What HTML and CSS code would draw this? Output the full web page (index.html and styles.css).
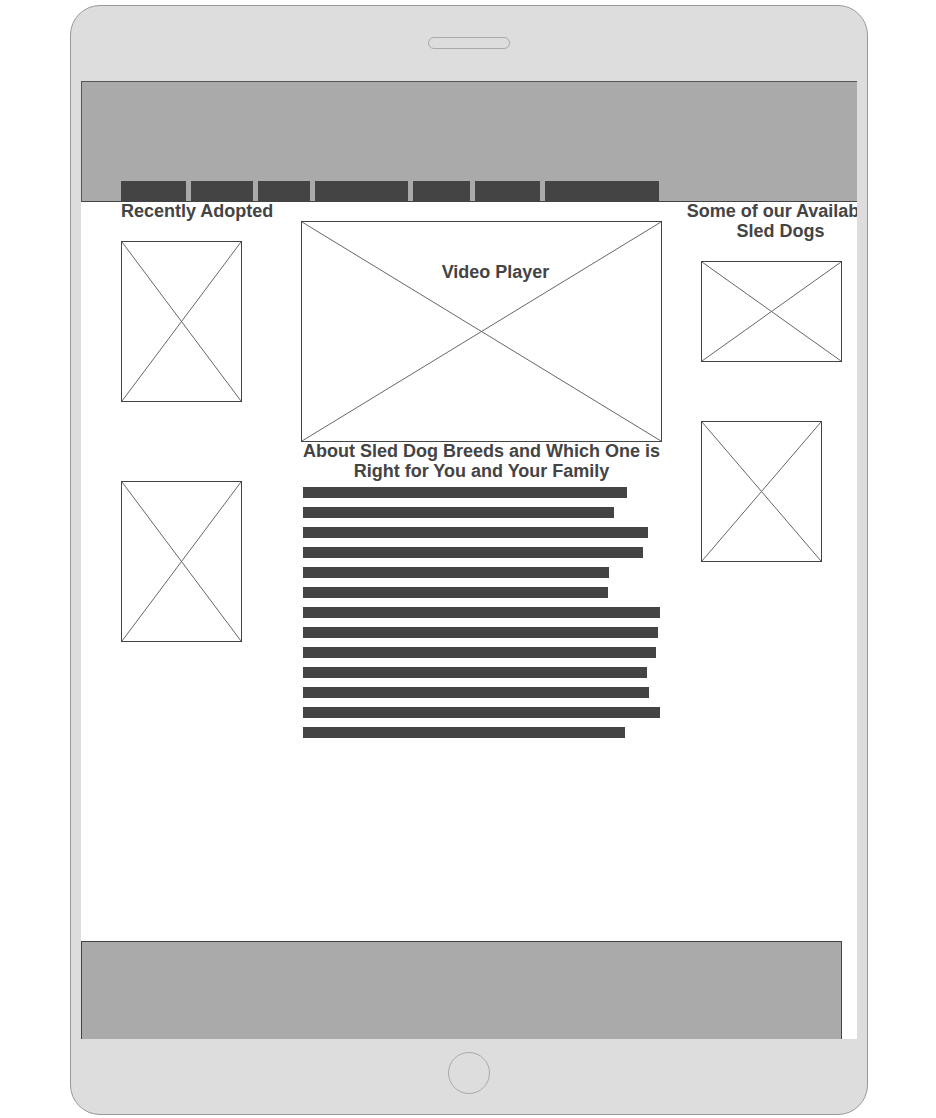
FILE: index.html
```html
<!DOCTYPE html>
<html lang="en">
<head>
    <meta charset="UTF-8">
    <title>Sled Dog Rescue - Tablet Wireframe</title>
    <link rel="stylesheet" href="styles.css">
</head>
<body>
    <div class="tablet">
        <div class="bezel bezel-top"><div class="speaker"></div></div>

        <div class="screen">
            <div class="header">
                <nav class="nav">
                    <span class="nav-item" style="width:65px"></span>
                    <span class="nav-item" style="width:62px"></span>
                    <span class="nav-item" style="width:52px"></span>
                    <span class="nav-item" style="width:93px"></span>
                    <span class="nav-item" style="width:57px"></span>
                    <span class="nav-item" style="width:65px"></span>
                    <span class="nav-item" style="width:114px"></span>
                </nav>
            </div>

            <div class="main">
                <div class="col col-left">
                    <h3>Recently Adopted</h3>
                    <div class="ph ph-adopted first">
                        <svg viewBox="0 0 100 100" preserveAspectRatio="none"><line x1="0" y1="0" x2="100" y2="100"/><line x1="100" y1="0" x2="0" y2="100"/></svg>
                    </div>
                    <div class="ph ph-adopted second">
                        <svg viewBox="0 0 100 100" preserveAspectRatio="none"><line x1="0" y1="0" x2="100" y2="100"/><line x1="100" y1="0" x2="0" y2="100"/></svg>
                    </div>
                </div>

                <div class="col col-center">
                    <div class="ph ph-video">
                        <svg viewBox="0 0 100 100" preserveAspectRatio="none"><line x1="0" y1="0" x2="100" y2="100"/><line x1="100" y1="0" x2="0" y2="100"/></svg>
                        <span class="ph-label">Video Player</span>
                    </div>
                    <h3 class="article-title">About Sled Dog Breeds and Which One is Right for You and Your Family</h3>
                    <div class="text-lines">
                        <div class="text-line" style="width:324px"></div>
                        <div class="text-line" style="width:311px"></div>
                        <div class="text-line" style="width:345px"></div>
                        <div class="text-line" style="width:340px"></div>
                        <div class="text-line" style="width:306px"></div>
                        <div class="text-line" style="width:305px"></div>
                        <div class="text-line" style="width:357px"></div>
                        <div class="text-line" style="width:355px"></div>
                        <div class="text-line" style="width:353px"></div>
                        <div class="text-line" style="width:344px"></div>
                        <div class="text-line" style="width:346px"></div>
                        <div class="text-line" style="width:357px"></div>
                        <div class="text-line" style="width:322px"></div>
                    </div>
                </div>

                <div class="col col-right">
                    <h3>Some of our Available Sled Dogs</h3>
                    <div class="ph ph-dog-wide">
                        <svg viewBox="0 0 100 100" preserveAspectRatio="none"><line x1="0" y1="0" x2="100" y2="100"/><line x1="100" y1="0" x2="0" y2="100"/></svg>
                    </div>
                    <div class="ph ph-dog-tall">
                        <svg viewBox="0 0 100 100" preserveAspectRatio="none"><line x1="0" y1="0" x2="100" y2="100"/><line x1="100" y1="0" x2="0" y2="100"/></svg>
                    </div>
                </div>
            </div>

            <div class="footer"></div>
        </div>

        <div class="bezel bezel-bottom"><div class="home-btn"></div></div>
    </div>
</body>
</html>
```

FILE: styles.css
```css
body { margin: 0; background: #fff; font-family: "Liberation Sans", Arial, sans-serif; color: #444; }

/* device frame */
.tablet { box-sizing: border-box; width: 798px; height: 1110px; margin: 5px 0 0 70px; background: #ddd; border: 1px solid #999; border-radius: 30px; display: flex; flex-direction: column; }
.bezel { display: flex; justify-content: center; flex: none; height: 75px; }
.bezel-top { align-items: flex-start; }
.speaker { box-sizing: border-box; width: 82px; height: 12px; margin-top: 31px; border: 1px solid #aaa; border-radius: 6px; }
.bezel-bottom { align-items: flex-start; }
.home-btn { box-sizing: border-box; width: 42px; height: 42px; margin-top: 13px; border: 1px solid #aaa; border-radius: 50%; }

/* screen */
.screen { height: 958px; margin: 0 10px; background: #fff; overflow: hidden; display: flex; flex-direction: column; flex: none; }

.header { box-sizing: border-box; height: 121px; flex: none; background: #aaa; border-top: 1px solid #555; border-left: 1px solid #555; border-bottom: 1px solid #444; display: flex; align-items: flex-end; padding-left: 39px; }
.nav { display: flex; gap: 5px; }
.nav-item { display: block; height: 20px; background: #444; }

.main { display: grid; grid-template-columns: 180px 380px 201px; padding-left: 40px; }
.col { display: flex; flex-direction: column; align-items: flex-start; }

h3 { margin: -1px 0 0; font-size: 18px; line-height: 20px; font-weight: bold; color: #444; }
.col-right h3 { width: 201px; margin-left: -1px; text-align: center; }

/* image placeholders */
.ph { box-sizing: border-box; position: relative; border: 1px solid #444; background: #fff; flex: none; }
.ph svg { display: block; width: 100%; height: 100%; }
.ph line { stroke: #666; stroke-width: 1; vector-effect: non-scaling-stroke; }
.ph-label { position: absolute; top: 40px; left: 28px; right: 0; text-align: center; font-size: 18px; line-height: 20px; font-weight: bold; color: #444; }

.ph-adopted { width: 121px; height: 161px; }
.ph-adopted.first { margin-top: 20px; }
.ph-adopted.second { margin-top: 79px; }

.ph-video { width: 361px; height: 221px; margin-top: 19px; }
.article-title { width: 365px; margin-left: -2px; text-align: center; }

.text-lines { margin-top: 6px; padding-left: 2px; }
.text-line { height: 11px; margin-bottom: 9px; background: #444; }

.ph-dog-wide { width: 141px; height: 101px; margin: 20px 0 0 20px; }
.ph-dog-tall { width: 121px; height: 141px; margin: 59px 0 0 20px; }

.footer { box-sizing: border-box; margin-top: auto; width: 761px; height: 98px; flex: none; background: #aaa; border: 1px solid #444; border-bottom: none; }
```
